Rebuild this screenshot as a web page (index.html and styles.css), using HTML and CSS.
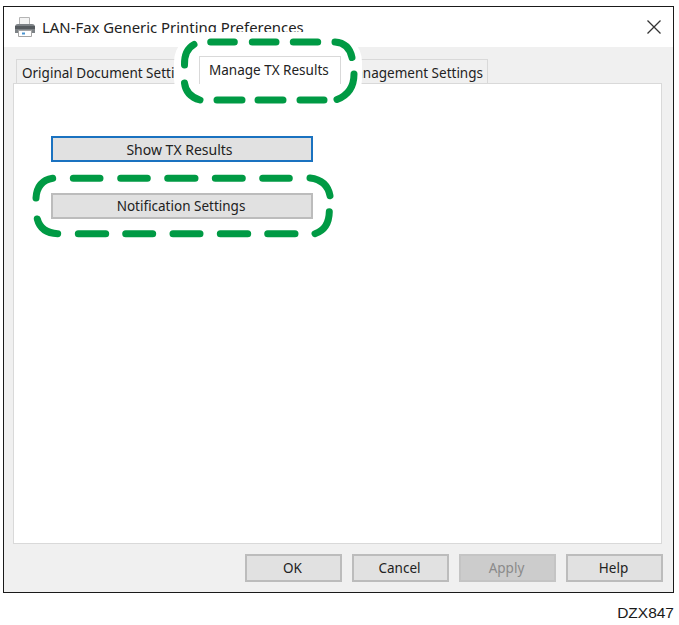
FILE: index.html
```html
<!DOCTYPE html>
<html lang="en">
<head>
  <meta charset="UTF-8">
  <meta name="viewport" content="width=device-width, initial-scale=1.0">
  <title>LAN-Fax Generic Printing Preferences</title>
  <link rel="stylesheet" href="styles.css">
</head>
<body>
  <div class="page">
    <div class="window">
      <header class="titlebar">
        <svg class="printer-icon" width="22" height="22" viewBox="0 0 22 22">
          <path d="M5.500 1.500h10v8h-10z" fill="#f4f4f4" stroke="#b4b4b4"/>
          <path d="M1 11q0-3 3-3h14q3 0 3 3v6H1z" fill="#7d8286"/>
          <path d="M1 10h20v3H1z" fill="#565b5f"/>
          <path d="M4.500 14.500h13v6h-13z" fill="#fff" stroke="#a4a4a4"/>
          <path d="M8 16.500h3v2H8z" fill="#4a94d0"/>
        </svg>
        <span class="window-title">LAN-Fax Generic Printing Preferences</span>
        <svg class="close-icon" width="14" height="14" viewBox="0 0 14 14">
          <path d="M.5.5l13 13M13.500.5l-13 13" fill="none" stroke="#333" stroke-width="1.300"/>
        </svg>
      </header>
      <div class="dialog">
        <nav class="tabs">
          <div class="tab tab-first">Original Document Settings</div>
          <div class="tab tab-active">Manage TX Results</div>
          <div class="tab tab-last">Management Settings</div>
        </nav>
        <main class="panel">
          <button class="btn btn-wide btn-focus">Show TX Results</button>
          <button class="btn btn-wide">Notification Settings</button>
        </main>
        <footer class="actions">
          <button class="btn btn-action">OK</button>
          <button class="btn btn-action">Cancel</button>
          <button class="btn btn-action btn-disabled">Apply</button>
          <button class="btn btn-action">Help</button>
        </footer>
      </div>
    </div>
    <div class="figure-code">DZX847</div>

    <!-- white halo behind the callout on the tab -->
    <svg class="overlay overlay-halo" width="679" height="625">
      <rect x="174" y="32" width="188" height="77" rx="30" fill="#fff"/>
    </svg>
    <!-- green dashed callouts -->
    <svg class="overlay overlay-marks" width="679" height="625">
      <g fill="none" stroke="#009a44" stroke-width="7" stroke-linecap="round">
        <path d="M184.500 65Q184 50 194 44.500"/>
        <path d="M210.700 42h23.600M252.300 42h23.700M293.300 42h24.400"/>
        <path d="M335 42Q349 43 352 57.500"/>
        <path d="M354 74Q354 93 337 99.500"/>
        <path d="M217 100h25M258 100h25M300 100h24"/>
        <path d="M184.500 83Q186 96 200 100"/>

        <path d="M36 198Q37 181 52.700 178.300"/>
        <path d="M73.300 178.300h26.700M120.700 178.300h26.600M167.700 178.300h27.300M215.300 178.300h27M262.700 178.300h26.600"/>
        <path d="M310 178Q327 180 330 195.700"/>
        <path d="M329.300 211.700Q329 229 315 233.700"/>
        <path d="M78.300 233.700h27.400M125.700 233.700h27M173 233.700h27M220.300 233.700h27.400M267.700 233.700h27.300"/>
        <path d="M37.300 219Q41 233 57.700 233.700"/>
      </g>
    </svg>
  </div>
</body>
</html>
```

FILE: styles.css
```css
body {
  margin: 0;
  background: #fff;
  color: #222;
  font-family: "Noto Sans", sans-serif;
  font-size: 13.5px;
}

.page {
  position: relative;
  width: 679px;
  height: 625px;
  padding: 6px 0 0 3px;
  box-sizing: border-box;
  overflow: hidden;
}

.window {
  display: flex;
  flex-direction: column;
  width: 671px;
  height: 587px;
  box-sizing: border-box;
  border: 1px solid #1a1a1a;
  background: #f0f0f0;
}

.titlebar {
  display: flex;
  align-items: center;
  height: 40px;
  padding: 0 12px 0 10px;
  background: #fff;
}

.printer-icon {
  margin-right: 6px;
}

.window-title {
  flex: 1;
  font-size: 14.9px;
}

.dialog {
  flex: 1;
  display: flex;
  flex-direction: column;
  padding: 9px 10px 10px 9px;
}

.tabs {
  display: flex;
  align-items: flex-end;
  padding-left: 3px;
  margin-bottom: -1px;
}

.tab {
  box-sizing: border-box;
  height: 25px;
  line-height: 26px;
  padding-left: 5px;
  border: 1px solid #d9d9d9;
  border-bottom: none;
  white-space: nowrap;
}

.tab-first {
  width: 183px;
}

.tab-active {
  position: relative;
  z-index: 2;
  width: 142px;
  height: 28px;
  padding-left: 9px;
  background: #fff;
}

.tab-last {
  width: 147px;
  padding-left: 1px;
}

.panel {
  flex: 1;
  display: flex;
  flex-direction: column;
  align-items: flex-start;
  gap: 31px;
  padding: 52px 0 0 37px;
  margin-right: 1px;
  background: #fff;
  border: 1px solid #d9d9d9;
}

.btn {
  box-sizing: border-box;
  padding: 0 2px 0 0;
  border: 2px solid #bcbcbc;
  background: #e1e1e1;
  color: #222;
  font-family: inherit;
  font-size: 13.5px;
}

.btn-wide {
  width: 262px;
  height: 26px;
}

.btn-focus {
  border-color: #1a72c0;
  font-size: 14px;
  padding-right: 5px;
}

.actions {
  display: flex;
  justify-content: flex-end;
  gap: 10px;
  margin-top: 10px;
}

.btn-action {
  width: 97px;
  height: 28px;
}

.btn-disabled {
  background: #ccc;
  border-color: #c4c4c4;
  color: #8a8a8a;
}

.figure-code {
  margin-top: 11px;
  padding-right: 5px;
  text-align: right;
  font-family: "Liberation Sans", sans-serif;
  font-size: 15.5px;
  color: #1a1a1a;
}

.overlay {
  position: absolute;
  top: 0;
  left: 0;
  pointer-events: none;
}

.overlay-halo {
  z-index: 1;
}

.overlay-marks {
  z-index: 3;
}
```
